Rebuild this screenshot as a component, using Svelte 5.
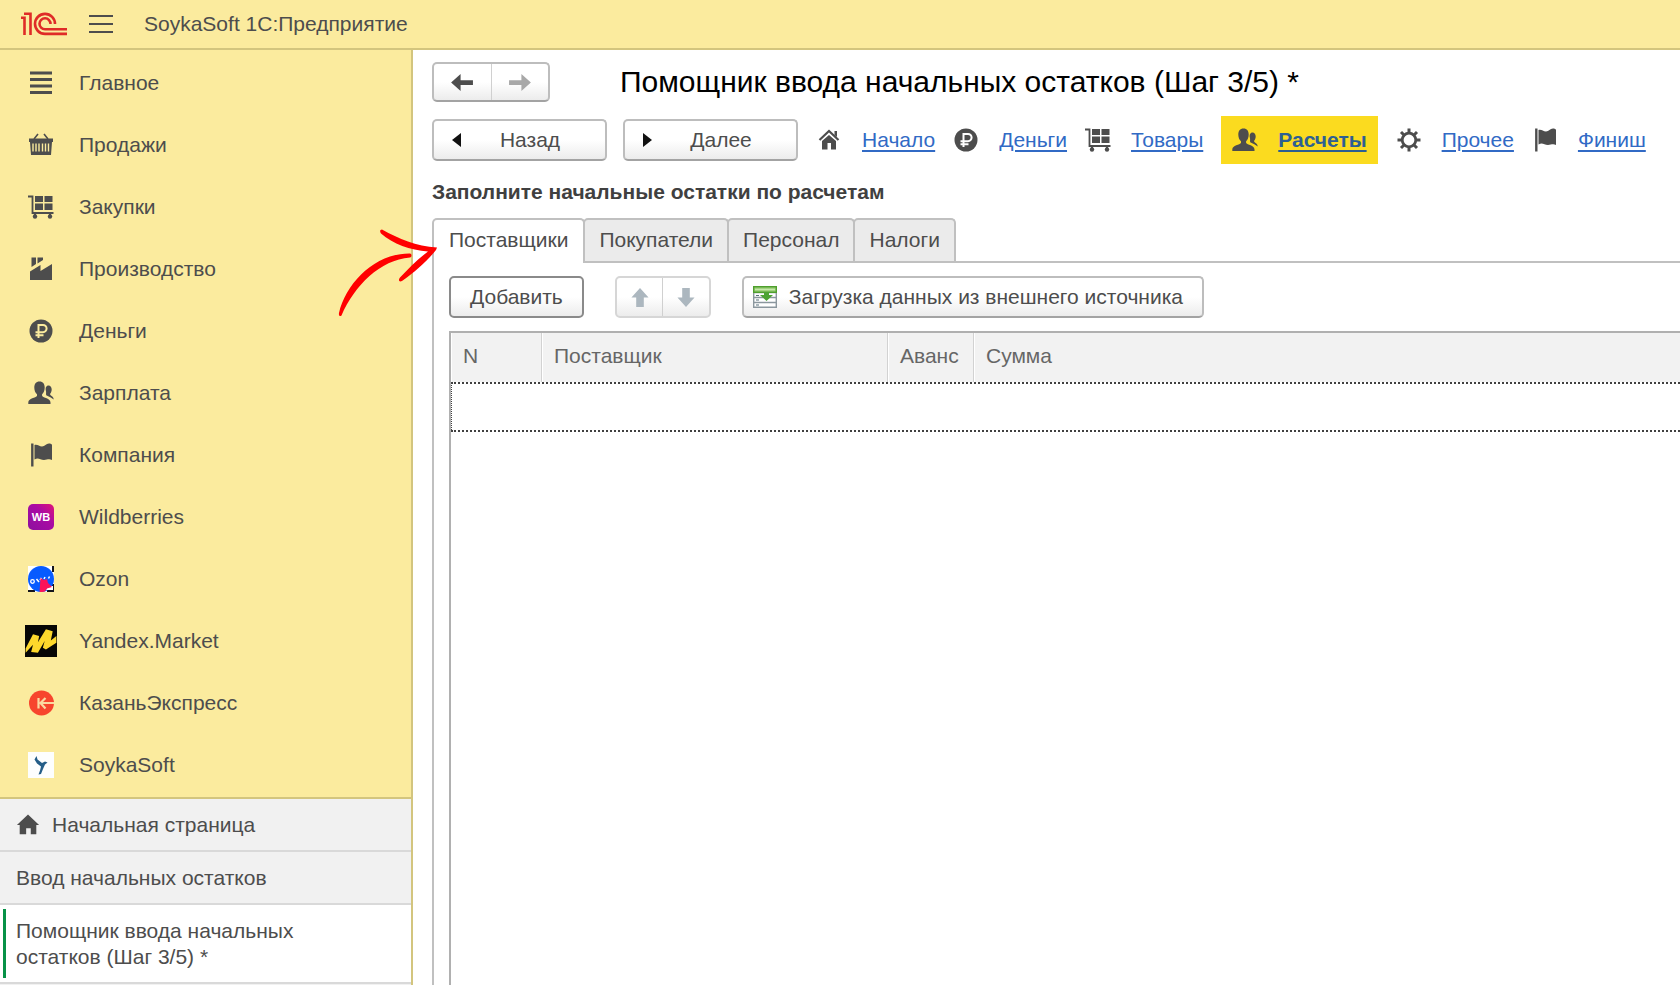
<script lang="ts">
	type Item = { label: string; icon: string };

	const sections: Item[] = [
		{ label: 'Главное', icon: 'lines' },
		{ label: 'Продажи', icon: 'basket' },
		{ label: 'Закупки', icon: 'cart' },
		{ label: 'Производство', icon: 'factory' },
		{ label: 'Деньги', icon: 'ruble' },
		{ label: 'Зарплата', icon: 'people' },
		{ label: 'Компания', icon: 'flag' },
		{ label: 'Wildberries', icon: 'wb' },
		{ label: 'Ozon', icon: 'ozon' },
		{ label: 'Yandex.Market', icon: 'yandex' },
		{ label: 'КазаньЭкспресс', icon: 'ke' },
		{ label: 'SoykaSoft', icon: 'soyka' }
	];

	const steps: Item[] = [
		{ label: 'Начало', icon: 'house' },
		{ label: 'Деньги', icon: 'ruble' },
		{ label: 'Товары', icon: 'cart' },
		{ label: 'Расчеты', icon: 'people' },
		{ label: 'Прочее', icon: 'gear' },
		{ label: 'Финиш', icon: 'flag' }
	];

	const tabs = ['Поставщики', 'Покупатели', 'Персонал', 'Налоги'];

	let activeStep = $state('Расчеты');
	let activeTab = $state('Поставщики');
</script>

{#snippet icon(name: string)}
	<svg class="icon {name}" viewBox="0 0 26 26" aria-hidden="true">
		{#if name === 'lines'}
			<path d="M2 3h22M2 9.500h22M2 16h22M2 22.500h22" stroke="currentColor" stroke-width="3.200" />
		{:else if name === 'basket'}
			<path d="M6 7l4-5M20 7l-4-5" stroke="currentColor" stroke-width="1.600" />
			<path d="M1 6.500h24v3.500h-1l-1 13H3l-1-13H1z" fill="currentColor" />
			<path d="M5 11.500v8M8 11.500v8M11 11.500v8M14.500 11.500v8M17.500 11.500v8M20.500 11.500v8" stroke="#fbeb9e" stroke-width="1.400" />
		{:else if name === 'cart'}
			<path d="M0 2.500h4.500v16.500h21" fill="none" stroke="currentColor" stroke-width="1.800" />
			<path d="M7 2h8v6H7zM16.500 2h8v6h-8zM7 9.500h8V16H7zM16.500 9.500h8V16h-8z" fill="currentColor" />
			<path d="M7 20v3M22 20v3" stroke="currentColor" stroke-width="2" />
			<circle cx="7" cy="22.500" r="2.200" fill="currentColor" />
			<circle cx="22" cy="22.500" r="2.200" fill="currentColor" />
		{:else if name === 'factory'}
			<path d="M2 24V15.500l10.500-6.500v6l11.500-7V24z" fill="currentColor" />
			<path d="M3.500 1.500H8v6.500l-4.500 3zM9.500 1.500H15v2.500l-5.500 3.500z" fill="currentColor" />
		{:else if name === 'ruble'}
			<circle cx="13" cy="13" r="11.500" fill="currentColor" />
			<path d="M10.500 20V7h4.500a3.500 3.500 0 0 1 0 7.200H7.500M7.500 17.200h8" fill="none" stroke="var(--icon-cut)" stroke-width="2" />
		{:else if name === 'people'}
			<path d="M11.500 1.500c3.600 0 5.200 2.600 5.200 6 0 2.800-1 5.300-2.600 6.800v1.700c1 1.800 8.400 2.200 8.400 6.500V24H.300v-1.500c0-4.300 7.700-4.700 8.700-6.500v-1.700C7.300 12.800 6.300 10.300 6.300 7.500c0-3.400 1.600-6 5.200-6z" fill="currentColor" />
			<path d="M20.500 5.500c2 0 3.200 1.700 3.200 4 0 1.900-.7 3.500-1.800 4.500.5 1.700 3.800 2.400 3.800 5.500-1.500-1.200-5-3.200-7.500-4.300-.4-2 .2-3-.3-4.500-.7-2.800.3-5.200 2.600-5.200z" fill="currentColor" />
		{:else if name === 'flag'}
			<path d="M4.300 1.500v23" stroke="currentColor" stroke-width="2.400" />
			<path d="M6.500 3c3-1 4.500 1.500 7.500 1.500S18 1.500 21 1.500c1.500 0 2 .5 3 1V18c-3-1.500-5 0-8 0-4 0-5.500-3-9.500-.5z" fill="currentColor" />
		{:else if name === 'house'}
			<path d="M3.500 13L13 4l9.500 9" fill="none" stroke="currentColor" stroke-width="2.200" />
			<path d="M18.500 4h2.500v6l-2.500-2zM6 14l7-6 7 6v8.500h-5V16h-3.500v6.500H6z" fill="currentColor" />
		{:else if name === 'home'}
			<path d="M13 1.500L25 13h-3v10h-6v-6.500h-5V23H4V13H1z" fill="currentColor" />
		{:else if name === 'gear'}
			<circle cx="13" cy="13" r="6.800" fill="none" stroke="currentColor" stroke-width="2.800" />
			<path d="M13 1.500v4M13 20.500v4M1.500 13h4M20.500 13h4M5 5l3 3M18 18l3 3M5 21l3-3M18 8l3-3" stroke="currentColor" stroke-width="3" />
		{:else if name === 'wb'}
			<defs>
				<linearGradient id="wb-fill" x1="0" y1="1" x2="1" y2="0">
					<stop offset="0" stop-color="#8c109f" />
					<stop offset="0.600" stop-color="#aa0ba4" />
					<stop offset="1" stop-color="#e01577" />
				</linearGradient>
			</defs>
			<rect width="26" height="26" rx="5" fill="url(#wb-fill)" />
			<text x="13" y="17" text-anchor="middle" font-size="11" font-weight="bold" fill="#fff">WB</text>
		{:else if name === 'ozon'}
			<rect width="26" height="26" fill="#fff" />
			<path d="M25 0v6M25 18v7h-6M0 25h7" fill="none" stroke="#15151c" stroke-width="2" />
			<circle cx="13" cy="13" r="13" fill="#075bff" />
			<path d="M20 20h5v4h-7z" fill="#fff" />
			<circle cx="4.500" cy="15.500" r="1.800" fill="none" stroke="#fff" stroke-width="1.300" />
			<path d="M8.500 13l2.500 3M12 14l1.500-2M16 13l1-2M20.500 12.500l1-2" stroke="#fff" stroke-width="1.500" />
			<path d="M12.500 12l3.500 2 3-1 1 4 4 4-5 1.500-2 3-5.500 1z" fill="#fb1359" />
		{:else if name === 'yandex'}
			<rect width="26" height="26" fill="#060606" />
			<path d="M.5 19L6.500 7.500l5 1.500-1 5L17 3.500l5.500 1.500-1.500 7.500 4.500-3.500v5.500L17 20l-2.500-1.500L16 13l-5.500 9.500L5 22l1.500-6L.5 22.500z" fill="#fdd82c" />
		{:else if name === 'ke'}
			<circle cx="13.500" cy="13" r="12.500" fill="#f7452d" />
			<path d="M10.500 8v10.500M17.500 8l-5 5 5 5.500M13 13h13" fill="none" stroke="#fbd8a0" stroke-width="2.200" />
		{:else if name === 'soyka'}
			<rect width="26" height="26" fill="#fdfefe" />
			<path d="M8.500 4l1 3.500 4.500 3.500 3-1.500 2.500 1-2.500 2-2 4.500-2 5-2.500.5 1.500-4 1-4-4-3-2.500-4z" fill="#245d87" />
		{/if}
	</svg>
{/snippet}

<div class="app">
	<header class="topbar">
		<svg class="logo" viewBox="0 0 46 24" aria-label="1С">
			<g fill="none" stroke="#df2b27" stroke-width="2.600">
				<path d="M0 5.800h3.500V23M3 1.800h6.500V23" />
				<path d="M34 12a10 10 0 1 0-10 9.900h22" />
				<path d="M29.500 12a5.500 5.500 0 1 0-5.500 5.300h22" />
			</g>
		</svg>
		<button class="menu-toggle" aria-label="Меню">
			<svg viewBox="0 0 24 20" aria-hidden="true">
				<path d="M0 2h24M0 10h24M0 18h24" stroke="currentColor" stroke-width="2" />
			</svg>
		</button>
		<span class="app-title">SoykaSoft 1С:Предприятие</span>
	</header>

	<aside class="sidebar">
		<nav class="sections">
			{#each sections as section}
				<a class="section" href="#section">
					<span class="section-icon">{@render icon(section.icon)}</span>
					{section.label}
				</a>
			{/each}
		</nav>
		<nav class="windows">
			<a class="window" href="#home">{@render icon('home')}Начальная страница</a>
			<a class="window" href="#balances">Ввод начальных остатков</a>
			<a class="window current" href="#assistant">Помощник ввода начальных остатков (Шаг 3/5) *</a>
		</nav>
	</aside>

	<main class="content">
		<div class="title-row">
			<div class="pair history">
				<button aria-label="Назад по истории">
					<svg viewBox="0 0 24 20"><path d="M0 10L10 1v6.500h13v5H10V19z" fill="#4d4d4d" /></svg>
				</button>
				<button aria-label="Вперед по истории" disabled>
					<svg viewBox="0 0 24 20"><path d="M24 10L14 1v6.500H1v5h13V19z" fill="#a8a8a8" /></svg>
				</button>
			</div>
			<h1>Помощник ввода начальных остатков (Шаг 3/5) *</h1>
		</div>

		<div class="steps-row">
			<div class="step-buttons">
				<button class="btn step-btn">
					<svg viewBox="0 0 9 14"><path d="M9 0v14L0 7z" fill="#111" /></svg>
					<span>Назад</span>
				</button>
				<button class="btn step-btn">
					<svg viewBox="0 0 9 14"><path d="M0 0v14l9-7z" fill="#111" /></svg>
					<span>Далее</span>
				</button>
			</div>
			{#each steps as step}
				<div class="step" class:active={step.label === activeStep}>
					{@render icon(step.icon)}
					<a href="#step" onclick={() => (activeStep = step.label)}>{step.label}</a>
				</div>
			{/each}
		</div>

		<h2>Заполните начальные остатки по расчетам</h2>

		<div class="tabs" role="tablist">
			{#each tabs as tab}
				<button
					class="tab"
					class:active={tab === activeTab}
					role="tab"
					aria-selected={tab === activeTab}
					onclick={() => (activeTab = tab)}
				>{tab}</button>
			{/each}
			<svg class="pointer" viewBox="0 0 100 90" aria-hidden="true">
				<path d="M44 .5C61 10 78 17 99 18.500L98 21C90 31 77 43 64 52c-3 1.500-4-1-2-3.500C70 40 80 30 90 22.500 72 21 55 15 43 4.500c-1.500-2-1-4 1-4z" fill="#f00" />
				<path d="M1 84C8 54 37 24 72 24.500c2 .5 2 3.500 0 4C42 31 17 56 3.500 86.500c-1.500 1.500-3 0-2.500-2.500z" fill="#f00" />
			</svg>
		</div>

		<section class="panel">
			<div class="toolbar">
				<button class="btn add">Добавить</button>
				<div class="pair move">
					<button aria-label="Переместить вверх" disabled>
						<svg viewBox="0 0 18 20"><path d="M9 0l9 10h-5v10H5V10H0z" fill="#acb7bf" /></svg>
					</button>
					<button aria-label="Переместить вниз" disabled>
						<svg viewBox="0 0 18 20"><path d="M9 20l9-10h-5V0H5v10H0z" fill="#acb7bf" /></svg>
					</button>
				</div>
				<button class="btn load">
					<svg viewBox="0 0 24 22">
						<path d="M.7 6.500h22.600v14.800H.7zM1 11.500h22M1 16.500h22" fill="#fff" stroke="#8b979e" stroke-width="1.400" />
						<path d="M3 9.500h3M3 14h3M3 19h3" stroke="#58707c" stroke-width="1.200" />
						<path d="M.7.700h22.600v5.600H.7z" fill="#9ed17b" stroke="#4f9f2e" stroke-width="1.400" />
						<path d="M11 6h5v3h4l-6.500 6L7 9h4z" fill="#4da334" />
						<path d="M2 3.500h20" stroke="#c5e8ab" stroke-width="1.200" />
					</svg>
					Загрузка данных из внешнего источника
				</button>
			</div>

			<div class="grid">
				<table>
					<colgroup>
						<col class="col-n" />
						<col class="col-supplier" />
						<col class="col-advance" />
						<col />
					</colgroup>
					<thead>
						<tr>
							<th>N</th>
							<th>Поставщик</th>
							<th>Аванс</th>
							<th>Сумма</th>
						</tr>
					</thead>
					<tbody>
						<tr>
							<td colspan="4"></td>
						</tr>
					</tbody>
				</table>
			</div>
		</section>
	</main>
</div>

<style>
	:global(body) {
		background: #fff;
	}

	.app {
		--icon-cut: #fbeb9e;
		display: grid;
		grid-template-columns: 413px minmax(0, 1fr);
		grid-template-rows: auto 1fr;
		height: 100vh;
		overflow: hidden;
		box-sizing: border-box;
		font-family: 'Liberation Sans', Arial, sans-serif;
		font-size: 21px;
		line-height: 26px;
		color: #4d4d4d;
	}

	button {
		font: inherit;
		color: inherit;
		cursor: pointer;
	}

	.icon {
		display: block;
		flex: none;
		width: 26px;
		height: 26px;
	}

	.icon.yandex {
		width: 32px;
		height: 32px;
	}

	.icon.home {
		width: 24px;
		height: 24px;
	}

	.topbar {
		grid-column: 1 / -1;
		display: flex;
		align-items: center;
		height: 48px;
		padding: 0 21px;
		background: #fbeb9e;
		border-bottom: 2px solid #d3c57e;
	}

	.logo {
		width: 46px;
		height: 24px;
	}

	.menu-toggle {
		display: flex;
		margin: 0 31px 0 22px;
		padding: 0;
		border: 0;
		background: none;
	}

	.menu-toggle svg {
		width: 24px;
		height: 20px;
	}

	.sidebar {
		display: flex;
		flex-direction: column;
		min-height: 0;
		border-right: 2px solid #d3c57e;
		background: #f1f1f1;
	}

	.sections {
		padding: 2px 0 1px;
		background: #fbeb9e;
		border-bottom: 2px solid #d3c57e;
	}

	.section {
		display: flex;
		align-items: center;
		height: 62px;
		padding-left: 25px;
		gap: 22px;
		color: inherit;
		text-decoration: none;
	}

	.section-icon {
		display: flex;
		justify-content: center;
		width: 32px;
	}

	.window {
		display: flex;
		align-items: center;
		gap: 12px;
		padding: 13px 80px 12px 16px;
		border-bottom: 2px solid #d9d9d9;
		color: inherit;
		text-decoration: none;
	}

	.window.current {
		background: linear-gradient(#079247, #079247) 3px 50% / 3px calc(100% - 8px) no-repeat #fff;
	}

	.content {
		display: flex;
		flex-direction: column;
		min-width: 0;
		padding: 12px 0 0 19px;
	}

	.title-row {
		display: flex;
		align-items: center;
		gap: 70px;
	}

	h1 {
		margin: 0;
		font-size: 30px;
		line-height: 36px;
		font-weight: normal;
		color: #000;
	}

	.btn,
	.pair {
		box-sizing: border-box;
		border: 2px solid #bdbdbd;
		border-bottom-color: #a3a3a3;
		border-radius: 5px;
		background: linear-gradient(#fff 50%, #ececec);
	}

	.pair {
		display: flex;
	}

	.pair button {
		display: flex;
		flex: 1;
		align-items: center;
		justify-content: center;
		padding: 0;
		border: 0;
		background: none;
	}

	.pair button + button {
		border-left: 1px solid #d0d0d0;
	}

	.history {
		width: 118px;
		height: 40px;
	}

	.history svg {
		width: 23px;
		height: 19px;
	}

	.steps-row {
		--icon-cut: #fff;
		display: flex;
		align-items: center;
		gap: 18px;
		margin-top: 14px;
	}

	.step-buttons {
		display: flex;
		gap: 16px;
	}

	.step-btn {
		display: flex;
		align-items: center;
		width: 175px;
		height: 42px;
		padding: 0 18px;
	}

	.step-btn svg {
		width: 9px;
		height: 14px;
	}

	.step-btn span {
		flex: 1;
		padding-left: 12px;
		text-align: center;
	}

	.step {
		display: flex;
		align-items: center;
		gap: 20px;
		height: 48px;
	}

	.step a {
		color: #316ac5;
		text-underline-offset: 3px;
		text-decoration-thickness: 2px;
	}

	.step.active {
		padding: 0 11px;
		background: #fbdb1f;
		font-weight: bold;
	}

	.step.active a {
		color: #2d5f92;
	}

	h2 {
		margin: 15px 0 13px;
		font-size: 21px;
		line-height: 26px;
		font-weight: bold;
		color: #404040;
	}

	.tabs {
		position: relative;
		display: flex;
		border-bottom: 2px solid #c0c0c0;
	}

	.tab {
		height: 43px;
		margin-left: -2px;
		padding: 0 14px 2px;
		border: 2px solid #c0c0c0;
		border-bottom: 0;
		border-radius: 5px 5px 0 0;
		background: #ebebeb;
	}

	.tab.active {
		margin: 0 0 -2px;
		height: 45px;
		padding: 0 15px 4px;
		background: #fff;
	}

	.pointer {
		position: absolute;
		left: -94px;
		top: 11px;
		width: 100px;
		height: 90px;
		pointer-events: none;
	}

	.panel {
		display: flex;
		flex: 1;
		flex-direction: column;
		padding: 13px 0 0 15px;
		border-left: 2px solid #c0c0c0;
	}

	.toolbar {
		display: flex;
		gap: 31px;
		height: 42px;
	}

	.add {
		padding: 0 19px;
		border-color: #8a8a8a;
	}

	.move {
		width: 96px;
		border-color: #d6d6d6;
	}

	.move svg {
		width: 18px;
		height: 19px;
	}

	.load {
		display: flex;
		align-items: center;
		gap: 12px;
		padding: 0 19px 0 9px;
	}

	.load svg {
		width: 24px;
		height: 22px;
	}

	.grid {
		flex: 1;
		margin-top: 13px;
		border: solid #b0b0b0;
		border-width: 2px 0 0 2px;
	}

	table {
		width: 100%;
		table-layout: fixed;
		border-collapse: separate;
		border-spacing: 0;
	}

	.col-n {
		width: 91px;
	}

	.col-supplier {
		width: 346px;
	}

	.col-advance {
		width: 86px;
	}

	th {
		height: 46px;
		padding: 0 0 3px 11px;
		border-right: 1px solid #d2d2d2;
		border-left: 1px solid #fff;
		background: #f2f2f2;
		font-weight: normal;
		text-align: left;
		color: #666;
	}

	th:last-child {
		border-right: 0;
	}

	td {
		height: 46px;
		padding: 0;
		border: dotted #404040;
		border-width: 2px 0 2px 1px;
	}
</style>
